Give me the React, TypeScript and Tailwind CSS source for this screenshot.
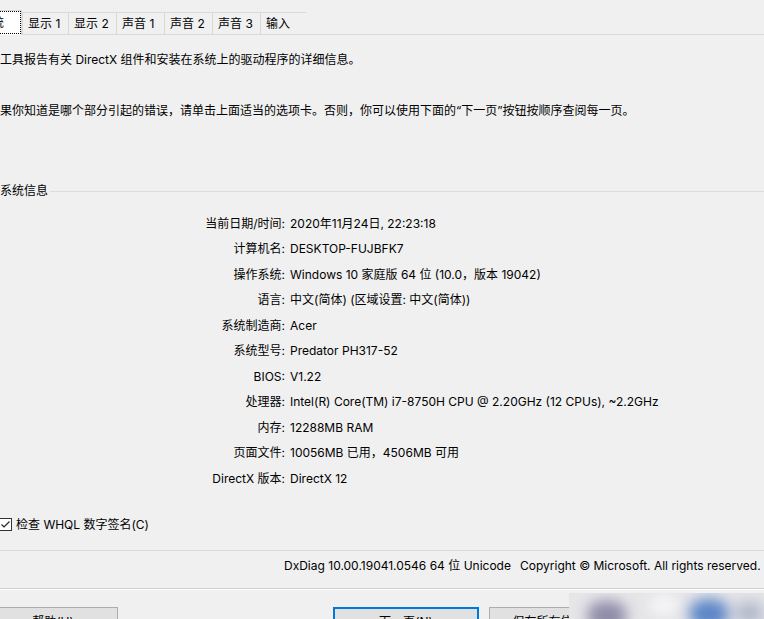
import React from 'react';

const tabs = [
  { label: '显示 1', w: 'w-[46px]' },
  { label: '显示 2', w: 'w-[48px]' },
  { label: '声音 1', w: 'w-[48px]' },
  { label: '声音 2', w: 'w-[48px]' },
  { label: '声音 3', w: 'w-[48px]' },
  { label: '输入', w: 'w-[46px]' },
];

const rows: [string, string][] = [
  ['当前日期/时间:', '2020年11月24日, 22:23:18'],
  ['计算机名:', 'DESKTOP-FUJBFK7'],
  ['操作系统:', 'Windows 10 家庭版 64 位 (10.0，版本 19042)'],
  ['语言:', '中文(简体) (区域设置: 中文(简体))'],
  ['系统制造商:', 'Acer'],
  ['系统型号:', 'Predator PH317-52'],
  ['BIOS:', 'V1.22'],
  ['处理器:', 'Intel(R) Core(TM) i7-8750H CPU @ 2.20GHz (12 CPUs), ~2.2GHz'],
  ['内存:', '12288MB RAM'],
  ['页面文件:', '10056MB 已用，4506MB 可用'],
  ['DirectX 版本:', 'DirectX 12'],
];

const TabStrip: React.FC = () => (
  <div className="flex items-end h-[35px]">
    {/* active "系统" tab, mostly scrolled off the left edge */}
    <div className="ml-[-40px] w-[62px] h-[25px] bg-white border-t border-r border-[#d9d9d9]">
      <div className="h-[23px] border border-dotted border-black flex items-center justify-end pr-[16px]">
        系统
      </div>
    </div>
    {tabs.map((t) => (
      <div
        key={t.label}
        className={`${t.w} h-[23px] border-t border-l border-b border-[#d9d9d9] flex items-center pl-[5px] whitespace-nowrap last:border-r`}
      >
        {t.label}
      </div>
    ))}
    <div className="flex-1 h-[23px] border-b border-[#d9d9d9]" />
  </div>
);

const CheckBox: React.FC = () => (
  <svg width="13" height="13" viewBox="0 0 13 13" className="ml-[-1px] shrink-0">
    <rect x="0.5" y="0.5" width="12" height="12" fill="#ffffff" stroke="#333333" />
    <path d="M2.5 6.5 L5 9 L10.5 3.5" fill="none" stroke="#222222" strokeWidth="1.2" />
  </svg>
);

export default function App() {
  return (
    <div className="relative w-[764px] h-[619px] overflow-hidden bg-[#f0f0f0] text-black text-[12px] leading-[16px] font-['Inter','Noto_Sans_CJK_SC',sans-serif]">
      <TabStrip />

      <p className="mt-[17px] whitespace-nowrap">工具报告有关 DirectX 组件和安装在系统上的驱动程序的详细信息。</p>
      <p className="mt-[35px] whitespace-nowrap">
        果你知道是哪个部分引起的错误，请单击上面适当的选项卡。否则，你可以使用下面的“下一页”按钮按顺序查阅每一页。
      </p>

      {/* group box header */}
      <div className="mt-[64px] flex items-center h-[16px]">
        <span className="whitespace-nowrap">系统信息</span>
        <div className="flex-1 h-px bg-[#dcdcdc] ml-[2px]" />
      </div>

      <div className="mt-[12px]">
        {rows.map(([k, v]) => (
          <div key={k} className="flex items-center h-[25.5px] whitespace-nowrap">
            <span className="w-[285px] text-right">{k}</span>
            <span className="ml-[5px]">{v}</span>
          </div>
        ))}
      </div>

      <div className="mt-[25px] flex items-center gap-[4px] h-[16px]">
        <CheckBox />
        <span className="whitespace-nowrap">检查 WHQL 数字签名(C)</span>
      </div>

      <div className="mt-[17px] h-px bg-[#d9d9d9]" />

      <p className="mt-[7px] pl-[284px] whitespace-nowrap">
        DxDiag 10.00.19041.0546 64 位 Unicode
        <span className="ml-[9px]">Copyright © Microsoft. All rights reserved.</span>
      </p>

      <div className="mt-[14px] h-px bg-[#d0d0d0]" />
      <div className="h-px bg-white" />

      <div className="mt-[17px] flex whitespace-nowrap">
        <button className="ml-[-28px] w-[146px] h-[30px] shrink-0 bg-[#e1e1e1] border border-[#adadad] flex items-center justify-center pl-[16px]">
          帮助(H)
        </button>
        <button className="ml-[215px] w-[146px] h-[30px] shrink-0 bg-[#e1e1e1] border-2 border-[#0078d7] flex items-center justify-center">
          下一页(N)
        </button>
        <button className="ml-[10px] w-[146px] h-[30px] shrink-0 bg-[#e1e1e1] border border-[#adadad] flex items-center justify-center">
          保存所有信息(S)...
        </button>
      </div>

      {/* blurred overlay patch in the bottom-right corner */}
      <div className="absolute left-[569px] top-[593px] w-[195px] h-[26px] overflow-hidden bg-[#e6e6e9]">
        <div className="absolute left-[18px] top-[8px] w-[40px] h-[30px] rounded-full bg-[#7a7698] blur-[7px] opacity-80" />
        <div className="absolute left-[80px] top-[2px] w-[30px] h-[20px] rounded-full bg-[#f4f4f6] blur-[6px]" />
        <div className="absolute left-[120px] top-[6px] w-[40px] h-[30px] rounded-full bg-[#4f7cc4] blur-[7px] opacity-90" />
        <div className="absolute left-[165px] top-[10px] w-[30px] h-[20px] rounded-full bg-[#8e9ab8] blur-[8px] opacity-70" />
      </div>
    </div>
  );
}
